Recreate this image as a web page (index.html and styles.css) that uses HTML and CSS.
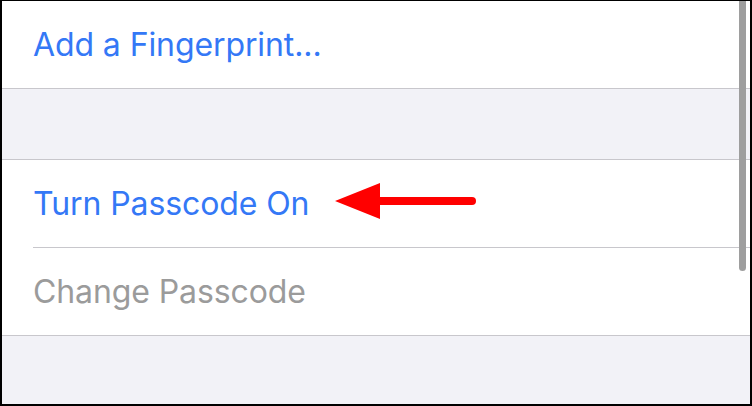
FILE: index.html
```html
<!DOCTYPE html>
<html lang="en">
<head>
    <meta charset="UTF-8">
    <meta name="viewport" content="width=device-width, initial-scale=1.0">
    <title>Passcode Settings</title>
    <link rel="stylesheet" href="styles.css">
</head>
<body>
    <div class="screen">
        <div class="group">
            <div class="row first"><span class="label link">Add a Fingerprint...</span></div>
        </div>
        <div class="gap"></div>
        <div class="group">
            <div class="row"><span class="label link">Turn Passcode On</span></div>
            <div class="row"><span class="label disabled">Change Passcode</span></div>
        </div>
        <div class="gap fill"></div>

        <div class="scrollbar"></div>
        <svg class="arrow" width="150" height="40" viewBox="0 0 150 40">
            <path d="M1 19 L46 1 L46 37 Z" fill="#ff0000"/>
            <line x1="44" y1="19" x2="138" y2="19" stroke="#ff0000" stroke-width="8" stroke-linecap="round"/>
        </svg>
    </div>
</body>
</html>
```

FILE: styles.css
```css
html, body {
    margin: 0;
    padding: 0;
}

body {
    font-family: Inter, "Liberation Sans", sans-serif;
}

.screen {
    position: relative;
    box-sizing: border-box;
    width: 752px;
    height: 406px;
    border: 2px solid #000;
    border-top-width: 1px;
    background-color: #f2f2f7;
    display: flex;
    flex-direction: column;
    overflow: hidden;
}

.group {
    background-color: #fff;
    border-bottom: 1px solid #c8c7cc;
}

.gap {
    height: 70px;
    border-bottom: 1px solid #c8c7cc;
}

.gap.fill {
    flex: 1;
    border-bottom: none;
}

.row {
    height: 87px;
    margin-left: 31px;
    display: flex;
    align-items: center;
    border-bottom: 1px solid #c8c7cc;
}

.row:last-child {
    border-bottom: none;
}

.label {
    font-size: 32px;
    letter-spacing: -0.1px;
}

.link {
    color: #3478f6;
}

.disabled {
    color: #9b9b9b;
}

.scrollbar {
    position: absolute;
    left: 737px;
    top: 0;
    width: 7px;
    height: 270px;
    background-color: #9e9e9e;
    border-radius: 0 0 4px 4px;
}

.arrow {
    position: absolute;
    left: 332px;
    top: 181px;
}
```
